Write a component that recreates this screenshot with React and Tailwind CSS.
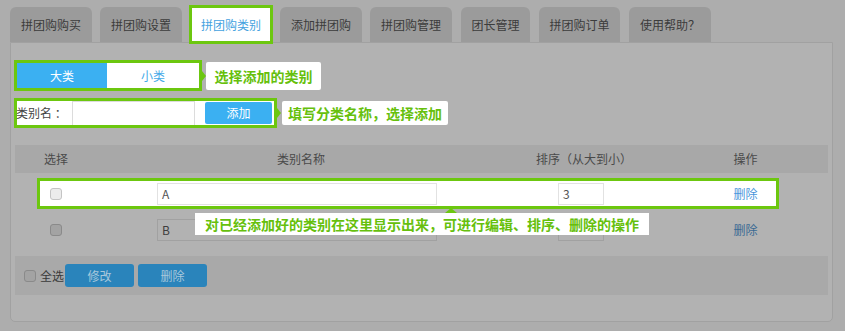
import React from "react";

const G = "border-[#6cc70f]";

function Tab({ label, w, active }) {
  if (active) {
    return (
      <div
        className={`relative z-10 mb-[-2px] flex h-[39px] w-[84px] items-center justify-center border-[3px] ${G} bg-white text-[12px] text-[#45a2e0]`}
      >
        {label}
      </div>
    );
  }
  return (
    <div
      className="flex h-[35px] items-center justify-center rounded-t-[6px] bg-[#9b9b9b] text-[12px] text-[#3c3c3c]"
      style={{ width: w }}
    >
      {label}
    </div>
  );
}

function Check({ light }) {
  return light ? (
    <div className="h-[12px] w-[12px] rounded-[3px] border border-[#c4c4c4] bg-[#ececec]" />
  ) : (
    <div className="h-[12px] w-[12px] rounded-[3px] border border-[#8a8a8a] bg-[#a3a3a3]" />
  );
}

function ArrowRight() {
  return (
    <div className="h-0 w-0 border-y-[5px] border-l-[4px] border-y-transparent border-l-[#6cc70f]" />
  );
}

export default function App() {
  return (
    <div className="h-[331px] w-[845px] overflow-hidden bg-[#adadad] font-['Noto_Sans_CJK_SC',sans-serif] leading-none">
      {/* tabs */}
      <div className="flex items-end pl-[10px] pt-[5px]">
        <div className="flex items-end gap-[8px]">
          <Tab label="拼团购购买" w={82} />
          <Tab label="拼团购设置" w={82} />
          <div className="ml-[-1px] mr-[-1px]">
            <Tab label="拼团购类别" active />
          </div>
          <Tab label="添加拼团购" w={82} />
          <Tab label="拼团购管理" w={82} />
          <div className="ml-[1px]">
            <Tab label="团长管理" w={69} />
          </div>
          <div className="ml-[1px]">
            <Tab label="拼团购订单" w={81} />
          </div>
          <div className="ml-[1px]">
            <Tab label="使用帮助？" w={82} />
          </div>
        </div>
      </div>

      {/* panel */}
      <div className="ml-[10px] h-[280px] w-[823px] rounded-b-[5px] border border-[#a1a1a1] bg-[#b2b2b2] pl-[3px]">
        {/* row 1: big/small toggle */}
        <div className="mt-[17px] flex items-center">
          <div className={`flex h-[31px] w-[188px] border-[3px] ${G}`}>
            <div className="flex w-[90px] items-center justify-center bg-[#3bb0f2] text-[12px] text-white">
              大类
            </div>
            <div className="flex flex-1 items-center justify-center bg-white text-[12px] text-[#45a9e8]">
              小类
            </div>
          </div>
          <ArrowRight />
          <div className="flex h-[28px] w-[115px] items-center justify-center rounded-[2px] bg-white text-[14px] font-bold text-[#66c00c]">
            选择添加的类别
          </div>
        </div>

        {/* row 2: name input */}
        <div className="mt-[7px] flex items-center">
          <div className={`flex h-[30px] w-[263px] items-center border-[3px] ${G} bg-white`}>
            <span className="ml-[-1px] w-[56px] text-[12px] text-[#444]">类别名 ：</span>
            <div className="h-[24px] w-[123px] self-end border border-b-0 border-[#dcdcdc] bg-white" />
            <div className="ml-[10px] flex h-[22px] w-[67px] items-center justify-center rounded-[2px] bg-[#3bb0f2] text-[12px] text-white">
              添加
            </div>
          </div>
          <ArrowRight />
          <div className="ml-[1px] flex h-[24px] w-[166px] items-center justify-center rounded-[2px] bg-white text-[14px] font-bold text-[#66c00c]">
            填写分类名称，选择添加
          </div>
        </div>

        {/* table */}
        <div className="relative ml-[1px] mt-[17px] w-[813px]">
          <div className="flex h-[28px] items-center bg-[#a8a8a8] text-[12px] text-[#4a4a4a]">
            <div className="w-[82px] text-center">选择</div>
            <div className="w-[408px] text-center">类别名称</div>
            <div className="w-[158px] text-center">排序（从大到小）</div>
            <div className="w-[165px] text-center">操作</div>
          </div>

          {/* row A highlighted */}
          <div className="relative mt-[3px] flex h-[36px] items-center">
            <div className={`absolute left-[22px] top-[2px] h-[31px] w-[742px] border-[3px] ${G} bg-white`} />
            <div className="relative flex w-[82px] justify-center">
              <Check light />
            </div>
            <div className="relative w-[408px] pl-[60px]">
              <div className="flex h-[22px] w-[280px] items-center border border-[#e2e2e2] bg-white pl-[4px] text-[12px] text-[#555]">
                A
              </div>
            </div>
            <div className="relative w-[158px] pl-[53px]">
              <div className="flex h-[22px] w-[46px] items-center border border-[#e2e2e2] bg-white pl-[4px] text-[12px] text-[#555]">
                3
              </div>
            </div>
            <div className="relative w-[165px] text-center text-[12px] text-[#4a95db]">删除</div>
          </div>

          {/* row B dimmed */}
          <div className="flex h-[36px] items-center">
            <div className="flex w-[82px] justify-center">
              <Check />
            </div>
            <div className="w-[408px] pl-[60px]">
              <div className="flex h-[22px] w-[280px] items-center border border-[#a1a1a1] bg-[#b2b2b2] pl-[4px] text-[12px] text-[#3e3e3e]">
                B
              </div>
            </div>
            <div className="w-[158px] pl-[53px]">
              <div className="h-[22px] w-[46px] border border-[#a1a1a1] bg-[#b2b2b2]" />
            </div>
            <div className="w-[165px] text-center text-[12px] text-[#3b6a94]">删除</div>
          </div>

          {/* callout 3 */}
          <div className="absolute left-[180px] top-[68px] flex h-[22px] w-[454px] items-center justify-center bg-white text-[14px] font-bold text-[#66c00c]">
            <div className="absolute left-[250px] top-[-5px] h-0 w-0 border-x-[6px] border-b-[5px] border-x-transparent border-b-[#6cc70f]" />
            对已经添加好的类别在这里显示出来，可进行编辑、排序、删除的操作
          </div>

          {/* footer */}
          <div className="mt-[8px] flex h-[39px] items-center bg-[#a9a9a9] pl-[9px]">
            <Check />
            <span className="ml-[4px] text-[12px] text-[#3a3a3a]">全选</span>
            <div className="ml-[1px] flex h-[23px] w-[69px] items-center justify-center rounded-[3px] bg-[#2a84bb] text-[12px] text-[#a8c8dc]">
              修改
            </div>
            <div className="ml-[4px] flex h-[23px] w-[69px] items-center justify-center rounded-[3px] bg-[#2a84bb] text-[12px] text-[#a8c8dc]">
              删除
            </div>
          </div>
        </div>
      </div>
    </div>
  );
}
